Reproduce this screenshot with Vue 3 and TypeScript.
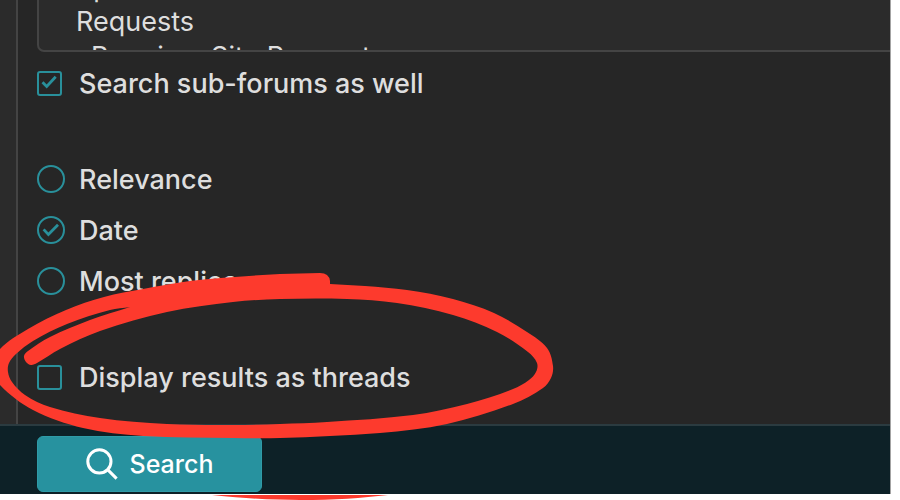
<script setup lang="ts">
import { onMounted, ref } from 'vue'

type Point = [number, number]

const forums = ['Specific Forum', 'Requests', 'Premium Site Request']
const orders = ['Relevance', 'Date', 'Most replies']

const selectedForums = ref<string[]>([])
const subForums = ref(true)
const order = ref('Date')
const asThreads = ref(false)
const list = ref<HTMLSelectElement | null>(null)

onMounted(() => {
  if (list.value) list.value.scrollTop = 29
})

// Curve through every point, as cubic segments
function smooth(points: Point[]): string {
  let d = ''
  for (let i = 0; i < points.length - 1; i++) {
    const a = points[Math.max(i - 1, 0)]
    const b = points[i]
    const c = points[i + 1]
    const e = points[Math.min(i + 2, points.length - 1)]
    const len = Math.hypot(c[0] - b[0], c[1] - b[1]) / 3
    const inLen = Math.hypot(c[0] - a[0], c[1] - a[1]) || 1
    const outLen = Math.hypot(e[0] - b[0], e[1] - b[1]) || 1
    const x1 = b[0] + ((c[0] - a[0]) / inLen) * len
    const y1 = b[1] + ((c[1] - a[1]) / inLen) * len
    const x2 = c[0] - ((e[0] - b[0]) / outLen) * len
    const y2 = c[1] - ((e[1] - b[1]) / outLen) * len
    d += `C${x1} ${y1} ${x2} ${y2} ${c[0]} ${c[1]}`
  }
  return d
}

const outer: Point[] = [
  [320, 273], [280, 274], [235, 277], [190, 281], [143, 289], [104, 297], [66, 310], [28, 329],
  [0, 349], [-8, 367], [0, 385], [33, 410], [83, 428], [143, 436], [233, 438],
  [280, 438], [380, 433], [447, 424], [513, 404], [543, 388], [551, 378], [553, 366],
  [547, 348], [527, 332], [494, 313], [453, 299], [407, 290], [365, 286], [330, 284],
]
const inner: Point[] = [
  [130, 307], [110, 310], [67, 324], [33, 341], [16, 354], [9, 363], [8, 372], [12, 382],
  [25, 395], [50, 407], [100, 418], [167, 424], [233, 425], [280, 424], [327, 422],
  [413, 415], [467, 404], [513, 389], [529, 380], [536, 372], [537, 363], [528, 352],
  [497, 332], [453, 315], [397, 303], [347, 299], [280, 299], [233, 302], [167, 312],
  [100, 331], [60, 349], [37, 363], [31, 365], [26, 362], [24, 356], [28, 351],
  [50, 337], [90, 320], [130, 307],
]
const loop =
  `M320 273${smooth(outer)}L330 281Q329 273 320 273Z` +
  `M130 307${smooth(inner)}Z`
</script>

<template>
  <main class="page">
    <form class="window" @submit.prevent>
      <div class="body">
        <div class="panel">
          <select ref="list" v-model="selectedForums" class="forums" multiple aria-label="Forums">
            <option v-for="(f, i) in forums" :key="f" :class="{ child: i === 2 }">{{ f }}</option>
          </select>

          <div class="groups">
            <label class="choice">
              <span class="control">
                <input v-model="subForums" type="checkbox" />
                <svg v-if="subForums" class="tick" viewBox="0 0 28 28">
                  <path d="M5.5 13.2l4.2 4.2 9-9.6" />
                </svg>
              </span>
              <span class="text">Search sub-forums as well</span>
            </label>

            <div class="orders" role="radiogroup" aria-label="Order by">
              <label v-for="o in orders" :key="o" class="choice">
                <span class="control">
                  <input v-model="order" type="radio" name="order" :value="o" />
                  <svg v-if="order === o" class="tick" viewBox="0 0 28 28">
                    <path d="M6.6 13.4l4.8 5 9.6-9.6" />
                  </svg>
                </span>
                <span class="text">{{ o }}</span>
              </label>
            </div>

            <label class="choice">
              <span class="control">
                <input v-model="asThreads" type="checkbox" />
                <svg v-if="asThreads" class="tick" viewBox="0 0 28 28">
                  <path d="M5.5 13.2l4.2 4.2 9-9.6" />
                </svg>
              </span>
              <span class="text">Display results as threads</span>
            </label>
          </div>
        </div>
      </div>

      <footer class="footer">
        <button class="search" type="submit">
          <svg class="glass" viewBox="0 0 32 32" aria-hidden="true">
            <circle cx="13.4" cy="13.4" r="11.6" />
            <path d="M21.6 21.6l9 9" />
          </svg>
          Search
        </button>
      </footer>
    </form>

    <svg class="marker" viewBox="0 0 560 500" aria-hidden="true">
      <path :d="loop" fill-rule="evenodd" />
      <path d="M212 495C250 499 275 500 300 500C335 500 362 498 388 495Z" />
    </svg>
  </main>
</template>

<style>
body {
  margin: 0;
  background: #fff;
}
</style>

<style scoped>
.page {
  position: relative;
  min-height: 500px;
  overflow: hidden;
  font-family: Inter, "Liberation Sans", sans-serif;
  font-size: 27px;
  font-weight: 450;
  line-height: 34px;
  color: #dedede;
}

.window {
  margin-right: 9px;
  border-right: 1px solid #a3a3a3;
}

.body {
  padding-left: 16px;
  background: #2b2b2b;
}

.panel {
  padding: 0 0 30px 19px;
  border-left: 2px solid #444;
  background: #262626;
}

.forums {
  display: block;
  box-sizing: border-box;
  width: 100%;
  height: 52px;
  padding: 0;
  border: solid #444;
  border-width: 0 0 2px 2px;
  border-radius: 0 0 0 7px;
  outline: none;
  overflow: hidden;
  background: #2b2b2b;
  color: inherit;
  font: inherit;
  scrollbar-width: none;
}

.forums option {
  min-height: 34px;
  padding: 0 0 0 37px;
  line-height: 34px;
}

.forums .child {
  padding: 1px 0 0 52px;
}

.groups {
  display: flex;
  flex-direction: column;
  gap: 62px;
  padding-top: 14px;
}

.orders {
  display: flex;
  flex-direction: column;
  gap: 17px;
}

.choice {
  display: flex;
  align-items: center;
  gap: 14px;
  height: 34px;
}

.text {
  padding-top: 2px;
}

.control {
  display: grid;
  align-items: center;
  width: 28px;
  height: 28px;
}

.control > * {
  grid-area: 1 / 1;
}

.control input {
  appearance: none;
  box-sizing: border-box;
  width: 25px;
  height: 25px;
  margin: 0;
  border: 2px solid #29909b;
  border-radius: 3px;
}

.control input[type="radio"] {
  width: 28px;
  height: 28px;
  border-radius: 50%;
}

.tick {
  width: 28px;
  height: 28px;
  fill: none;
  stroke: #29909b;
  stroke-width: 2.8;
  pointer-events: none;
}

.footer {
  padding: 10px 0 2px 37px;
  border-top: 2px solid #2b3b40;
  background: #0d2127;
}

.search {
  display: flex;
  align-items: center;
  justify-content: center;
  gap: 12px;
  width: 225px;
  height: 56px;
  padding: 0;
  border: 1px solid #2f9ba7;
  border-radius: 6px;
  background: #27929f;
  color: #fff;
  font: inherit;
  font-size: 25px;
}

.glass {
  width: 32px;
  height: 32px;
  fill: none;
  stroke: #fff;
  stroke-width: 3;
}

.marker {
  position: absolute;
  top: 0;
  left: 0;
  width: 560px;
  height: 500px;
  fill: #fd3a2d;
  pointer-events: none;
}
</style>
